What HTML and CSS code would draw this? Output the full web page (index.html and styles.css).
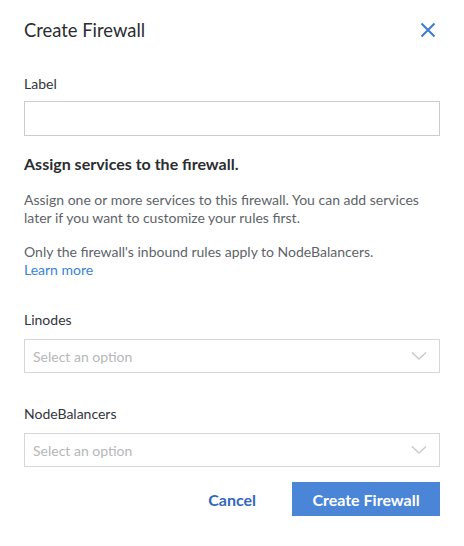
FILE: index.html
```html
<!DOCTYPE html>
<html>
<head>
<meta charset="utf-8">
<link rel="stylesheet" href="styles.css">
</head>
<body>
<div class="dialog">
  <div class="header">
    <h2 class="title">Create Firewall</h2>
    <button class="close" aria-label="Close">
      <svg width="16" height="16" viewBox="0 0 16 16"><path d="M1.5 1.5 L14.5 14.5 M14.5 1.5 L1.5 14.5" stroke="#3a7bd5" stroke-width="2" fill="none"/></svg>
    </button>
  </div>
  <label class="field-label">Label</label>
  <input class="text-input" type="text">
  <h3 class="subtitle">Assign services to the firewall.</h3>
  <p class="desc">Assign one or more services to this firewall. You can add services later if you want to customize your rules first.</p>
  <p class="desc desc2">Only the firewall's inbound rules apply to NodeBalancers.<br><a class="link" href="#">Learn more</a></p>
  <label class="field-label sel-label">Linodes</label>
  <div class="select"><span>Select an option</span>
    <svg width="16" height="10" viewBox="0 0 16 10"><path d="M1 1.5 L8 8 L15 1.5" stroke="#c9cacb" stroke-width="1.5" fill="none"/></svg>
  </div>
  <label class="field-label sel-label">NodeBalancers</label>
  <div class="select"><span>Select an option</span>
    <svg width="16" height="10" viewBox="0 0 16 10"><path d="M1 1.5 L8 8 L15 1.5" stroke="#c9cacb" stroke-width="1.5" fill="none"/></svg>
  </div>
  <div class="actions">
    <button class="btn-cancel">Cancel</button>
    <button class="btn-primary">Create Firewall</button>
  </div>
</div>
</body>
</html>
```
FILE: styles.css
```css
* { box-sizing: border-box; }
html, body { margin: 0; padding: 0; background: #fff; }
body { font-family: Lato, "Liberation Sans", sans-serif; color: #32363c; }
.dialog { padding: 16px 24px 0 24px; display: flex; flex-direction: column; }
.header { display: flex; justify-content: space-between; align-items: center; height: 28px; }
.title { margin: 0; font-size: 18.4px; font-weight: 400; color: #2a2d31; }
.close { background: none; border: 0; padding: 0; margin-right: 4px; width: 16px; height: 16px; display: flex; }
.field-label { display: block; font-size: 14px; color: #32363c; margin-top: 31px; line-height: 18px; }
.text-input { margin-top: 8px; height: 35px; width: 100%; border: 1px solid #cccccc; font: inherit; }
.subtitle { margin: 17px 0 0; font-size: 16px; font-weight: 700; line-height: 22px; color: #2a2d31; }
.desc { margin: 16px 0 0; font-size: 14px; line-height: 18px; color: #606469; }
.desc2 { margin-top: 16px; }
.link { color: #3683dc; text-decoration: none; }
.sel-label { margin-top: 32px; }
.select { margin-top: 10px; height: 34px; border: 1px solid #d6d7d9; display: flex; justify-content: space-between; align-items: center; padding: 0 12px 0 8px; font-size: 14px; color: #b5b7ba; }
.actions { display: flex; justify-content: flex-end; align-items: center; margin-top: 15px; gap: 36px; }
.btn-cancel { background: none; border: 0; font: inherit; font-size: 16px; font-weight: 700; color: #3567c0; padding: 0; }
.btn-primary { background: #4a85d8; color: #fff; border: 0; font: inherit; font-size: 16px; font-weight: 700; height: 34px; width: 148px; }
```
